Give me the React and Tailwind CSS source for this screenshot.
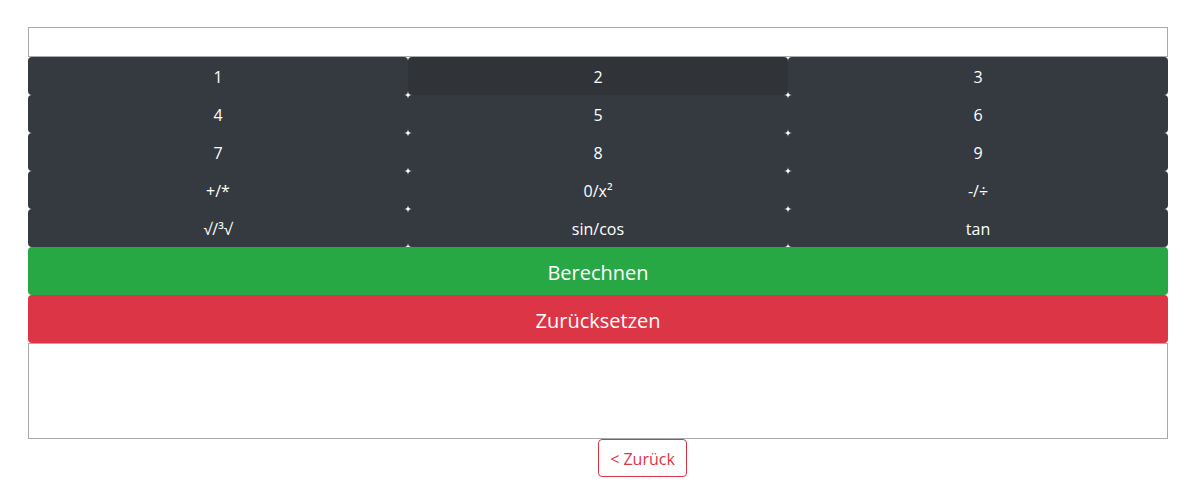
import React from "react";

const keys = [
  "1", "2", "3",
  "4", "5", "6",
  "7", "8", "9",
  "+/*", "0/x²", "-/÷",
  "√/³√", "sin/cos", "tan",
];

export default function App() {
  return (
    <div
      className="w-[1184px] h-[486px] bg-white pt-[27px]"
      style={{ fontFamily: '"Segoe UI", "Open Sans", "Noto Sans", sans-serif' }}
    >
      <div className="ml-[28px] w-[1140px] flex flex-col">
        <div className="h-[30px] border border-[#aaaaaa]" />
        <div className="grid grid-cols-3">
          {keys.map((k, i) => (
            <button
              key={i}
              className={`h-[38px] pt-[2px] rounded-[4px] text-white text-[16px] leading-[24px] ${
                k === "2" ? "bg-[#303439]" : "bg-[#343a40]"
              }`}
            >
              {k}
            </button>
          ))}
        </div>
        <button className="h-[48px] pt-[3px] rounded-[4px] bg-[#28a745] text-white text-[20px]">
          Berechnen
        </button>
        <button className="h-[48px] pt-[3px] rounded-[4px] bg-[#dc3545] text-white text-[20px]">
          Zurücksetzen
        </button>
        <div className="h-[96px] border border-[#aaaaaa]" />
      </div>
      <div className="ml-[598px]">
        <button className="w-[89px] h-[38px] pt-[1px] border border-[#dc3545] rounded-[4px] text-[#dc3545] text-[16px]">
          &lt; Zurück
        </button>
      </div>
    </div>
  );
}
